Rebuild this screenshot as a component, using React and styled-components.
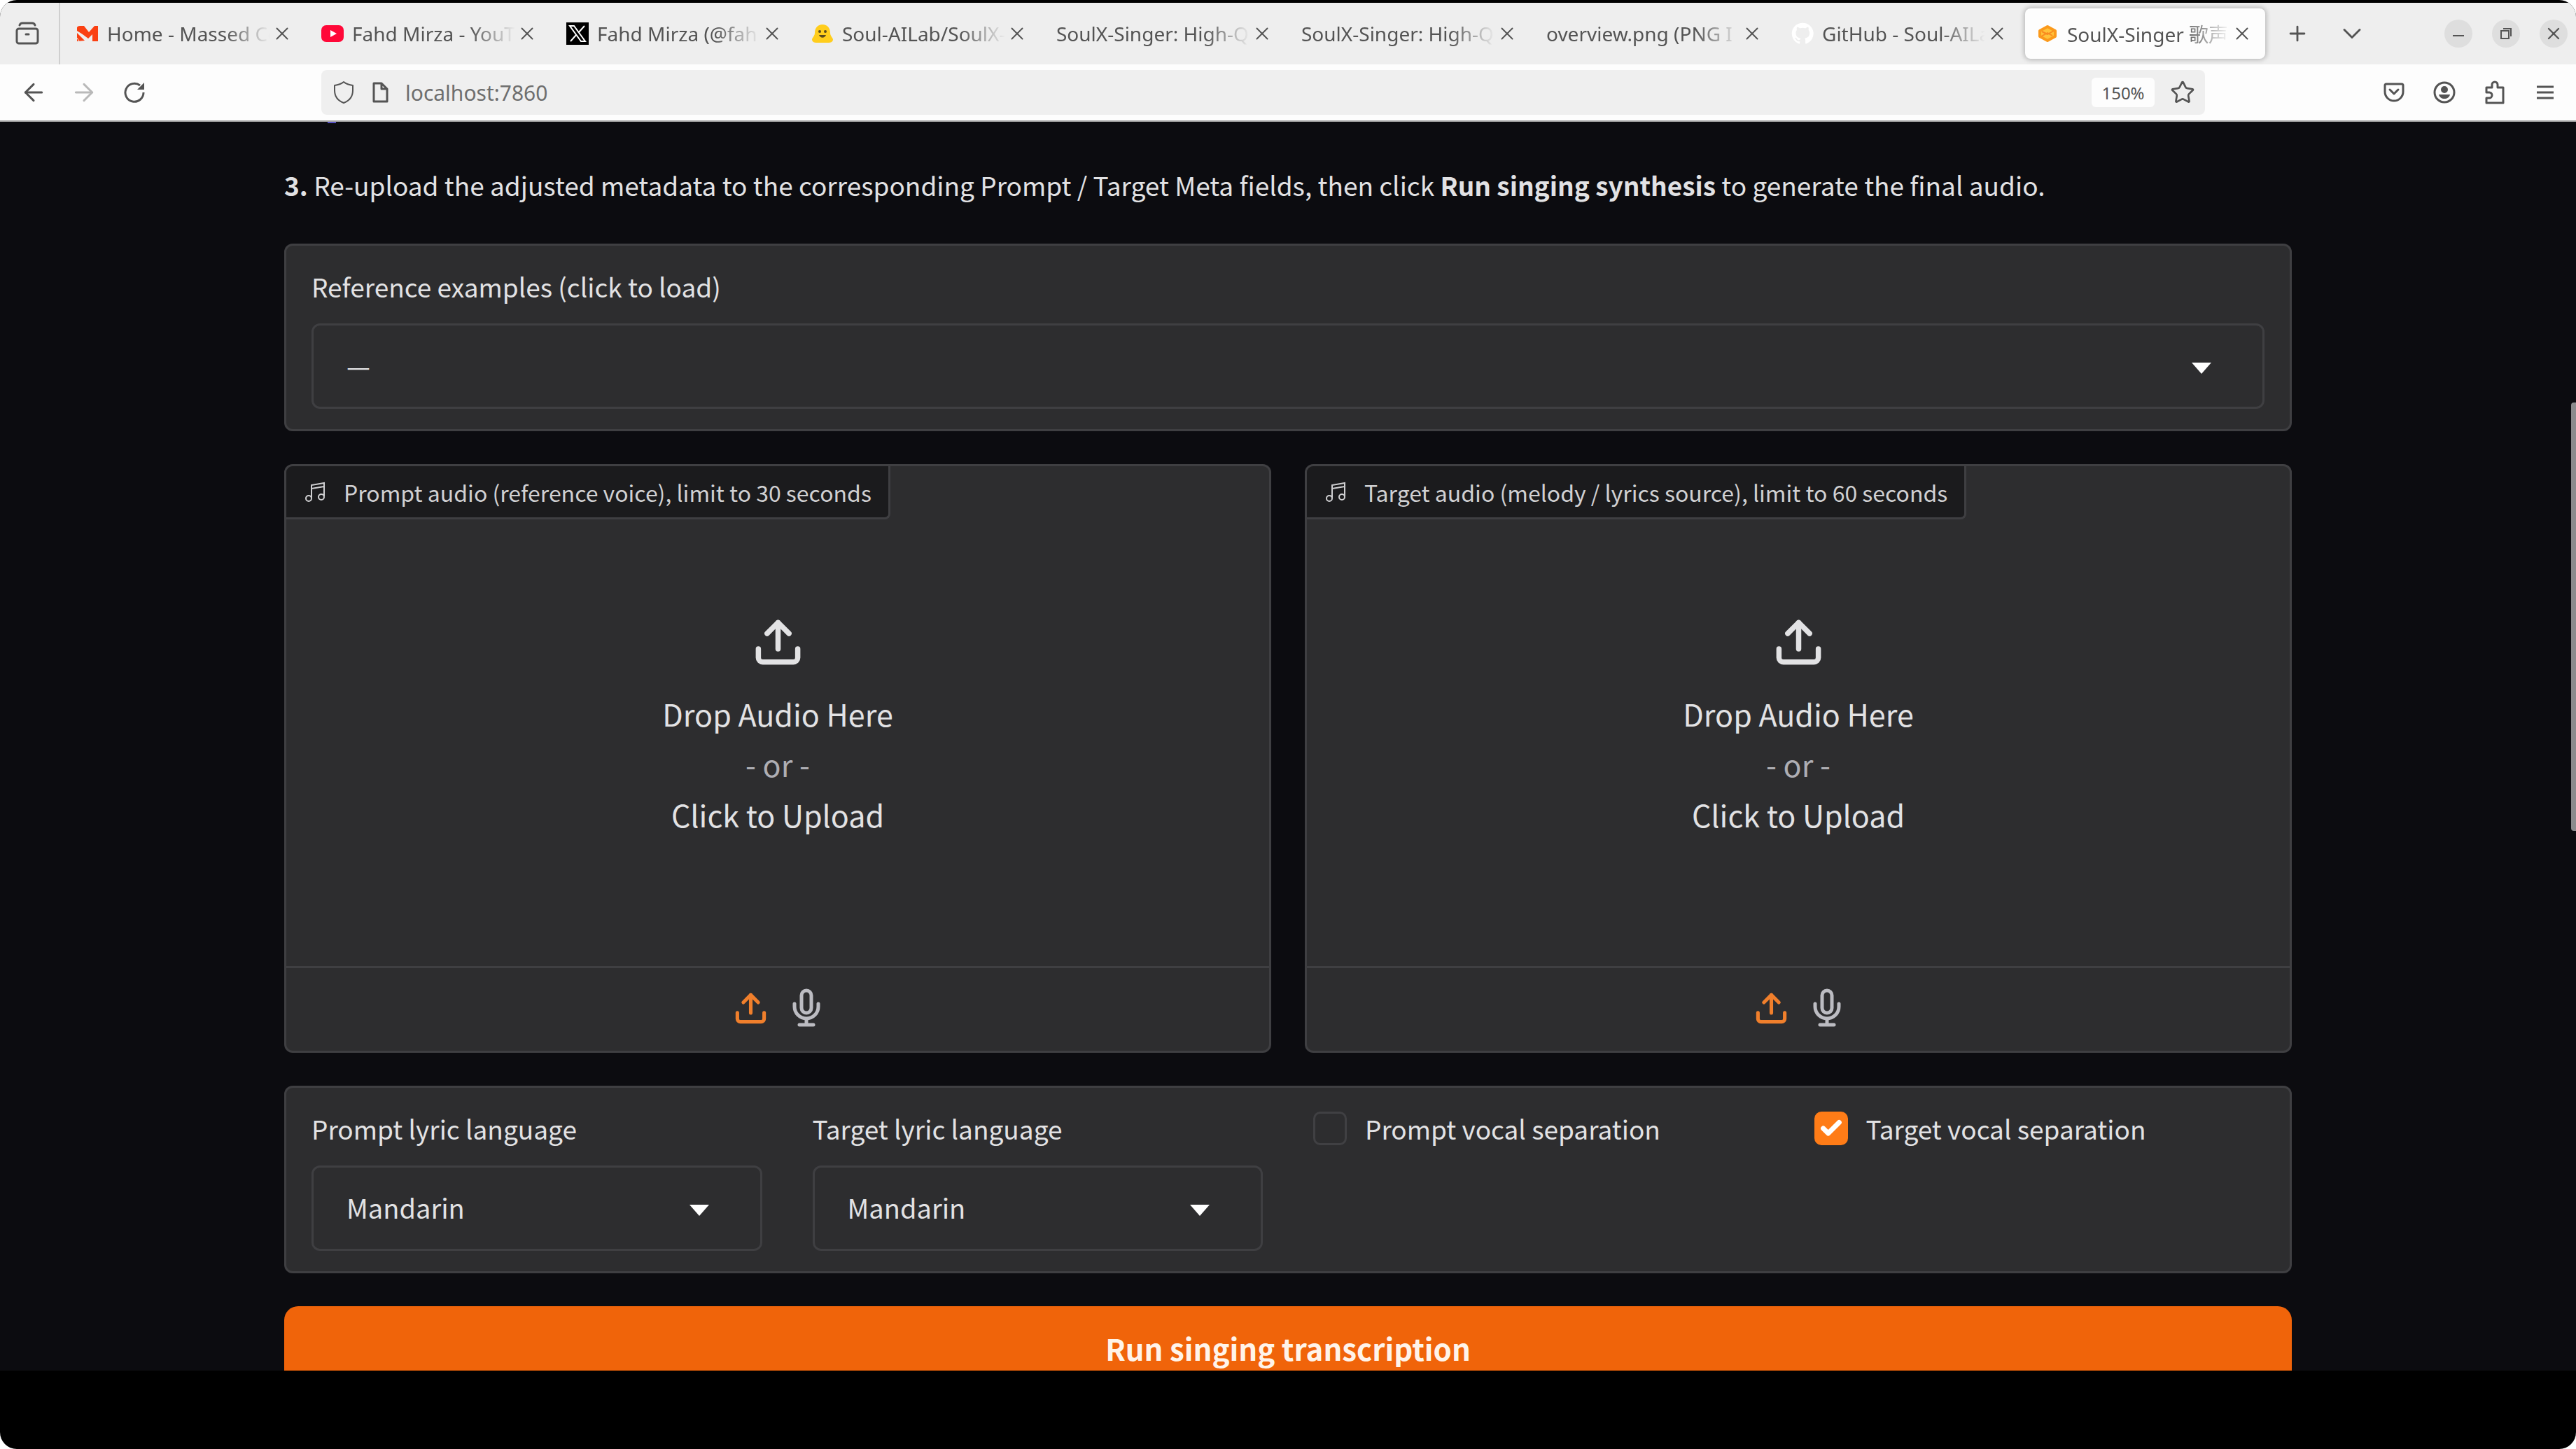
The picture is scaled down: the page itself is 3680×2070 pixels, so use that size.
import React from "react"
import styled, { createGlobalStyle } from "styled-components"
import { ArrowLeft, ArrowRight, Check, ChevronDown, Plus, Star, Upload, X } from "lucide-react"

const GlobalStyle = createGlobalStyle`
  * {
    box-sizing: border-box;
  }

  body {
    margin: 0;
    background: #ffffff;
  }

  button, select, input {
    font: inherit;
    color: inherit;
  }

  button {
    padding: 0;
    border: 0;
    background: none;
  }

  svg {
    display: block;
    flex-shrink: 0;
  }
`

const Screen = styled.div`
  display: flex;
  flex-direction: column;
  height: 100vh;
  padding: 4px 0 112px;
  overflow: hidden;
  border-radius: 24px;
  background: #000000;
`

/* browser chrome */

const TabStrip = styled.nav`
  display: flex;
  align-items: center;
  height: 88px;
  padding-right: 12px;
  background: #eeeeee;
  color: #545454;
  font-family: "Noto Sans", "Noto Sans CJK SC", sans-serif;
  font-size: 28px;
`

const SidebarButton = styled.button`
  display: flex;
  align-items: center;
  justify-content: center;
  align-self: stretch;
  width: 86px;
  padding-right: 7px;
  margin-right: 7px;
  border-right: 2px solid #cfcfcf;
`

const Tab = styled.div`
  display: flex;
  align-items: center;
  gap: 12px;
  width: 343px;
  height: 72px;
  padding: 0 18px 0 16px;
  margin-right: 7px;
  border-radius: 8px;
  background: ${p => (p.$active ? "#fdfdfd" : "transparent")};
  box-shadow: ${p => (p.$active ? "0 0 6px 2px rgba(0, 0, 0, 0.22)" : "none")};
`

const TabTitle = styled.span`
  flex: 1;
  min-width: 0;
  overflow: hidden;
  white-space: nowrap;
  mask-image: linear-gradient(to left, transparent, #000 64px);
`

const TabClose = styled.button`
  display: flex;
  margin-left: -10px;
`

const StripButton = styled.button`
  display: flex;
  align-items: center;
  justify-content: center;
  width: 78px;
  height: 64px;
`

const WindowButtons = styled.div`
  display: flex;
  gap: 28px;
  margin-left: auto;
`

const WindowButton = styled.button`
  display: flex;
  align-items: center;
  justify-content: center;
  width: 40px;
  height: 40px;
  border-radius: 50%;
  background: #dedede;
`

const Toolbar = styled.header`
  display: flex;
  align-items: center;
  justify-content: space-between;
  height: 82px;
  padding: 0 26px 0 30px;
  border-bottom: 2px solid #a5a5a5;
  background: #fdfdfd;
  color: #545454;
  font-family: "Noto Sans", sans-serif;
`

const ToolGroup = styled.div`
  display: flex;
  gap: 36px;
`

const ToolButton = styled.button`
  display: flex;
  align-items: center;
  justify-content: center;
  width: 36px;
  height: 40px;
  opacity: ${p => (p.disabled ? 0.4 : 1)};
`

const AddressBar = styled.div`
  display: flex;
  align-items: center;
  gap: 22px;
  flex: 1;
  height: 64px;
  padding: 0 14px 0 16px;
  margin: 0 252px 0 249px;
  border-radius: 8px;
  background: #efefef;
`

const AddressInput = styled.input`
  flex: 1;
  min-width: 0;
  padding: 0;
  border: 0;
  outline: 0;
  background: none;
  color: #6e6e6e;
  font-size: 30px;
`

const ZoomLevel = styled.button`
  width: 90px;
  height: 42px;
  border-radius: 6px;
  background: #fdfdfd;
  font-size: 24px;
`

/* page */

const Viewport = styled.div`
  position: relative;
  flex: 1;
  min-height: 0;
  overflow: hidden;
  background: #0c0c10;
  color: #e2e2e4;
  font-family: "Noto Sans CJK SC", sans-serif;
  font-size: 37px;
`

const ScrollThumb = styled.div`
  position: absolute;
  top: 401px;
  right: 0;
  width: 7px;
  height: 612px;
  border-radius: 4px 0 0 4px;
  background: #8b8b8d;
`

/* what is left of the link scrolled off the top */
const LinkTail = styled.div`
  position: absolute;
  top: 0;
  left: 468px;
  width: 12px;
  height: 2px;
  background: #5a55c8;
`

const Page = styled.main`
  display: flex;
  flex-direction: column;
  gap: 47px;
  max-width: 2948px;
  padding: 60px 40px 0;
  margin: 0 auto;
`

const Step = styled.p`
  margin: 0 0 7px;
  line-height: 60px;
`

const Panel = styled.section`
  display: grid;
  grid-template-columns: repeat(${p => p.$columns || 1}, 1fr);
  column-gap: 72px;
  padding: 30px 36px 29px;
  border: 3px solid #3f3f42;
  border-radius: 12px;
  background: #2d2d2f;
`

const Label = styled.label`
  display: block;
  margin-bottom: 25px;
  line-height: 56px;
`

const SelectBox = styled.div`
  position: relative;

  svg {
    position: absolute;
    top: 56px;
    right: 76px;
    pointer-events: none;
  }
`

const Select = styled.select`
  display: block;
  width: 100%;
  height: 122px;
  padding: 0 47px 4px;
  border: 3px solid #3f3f42;
  border-radius: 12px;
  background: #2d2d2f;
  font-size: 38px;
  appearance: none;
`

const CheckLabel = styled.label`
  display: flex;
  align-items: center;
  gap: 26px;
  align-self: start;
  height: 56px;
`

const CheckSlot = styled.span`
  display: grid;
  place-items: center;

  > * {
    grid-area: 1 / 1;
  }

  svg {
    pointer-events: none;
  }
`

const Checkbox = styled.input`
  width: 48px;
  height: 48px;
  margin: 0;
  border: 3px solid #404043;
  border-radius: 10px;
  background: #2d2d2f;
  appearance: none;

  &:checked {
    border-color: #ff7c17;
    background: #ff7c17;
  }

  & + svg {
    visibility: hidden;
  }

  &:checked + svg {
    visibility: visible;
  }
`

const AudioRow = styled.div`
  display: grid;
  grid-template-columns: 1fr 1fr;
  gap: 48px;
`

const AudioCard = styled.section`
  display: flex;
  flex-direction: column;
  height: 841px;
  overflow: hidden;
  border: 3px solid #3f3f42;
  border-radius: 12px;
  background: #2d2d2f;
`

const AudioTitle = styled.h2`
  display: flex;
  align-items: center;
  align-self: flex-start;
  gap: 26px;
  height: 76px;
  padding: 0 24px 0 26px;
  margin: 0;
  border: solid #3f3f42;
  border-width: 0 3px 3px 0;
  border-bottom-right-radius: 8px;
  background: #1b1b1d;
  color: #d0d0d2;
  font-size: 32px;
  font-weight: 400;
`

const DropZone = styled.button`
  display: flex;
  flex: 1;
  flex-direction: column;
  align-items: center;
  padding-top: 138px;
  font-size: 43px;
  line-height: 72px;

  svg {
    margin-bottom: 28px;
  }
`

const Or = styled.span`
  color: #aeaeb4;
`

const Sources = styled.div`
  display: flex;
  align-items: center;
  justify-content: center;
  gap: 34px;
  height: 121px;
  padding: 0 4px 4px 0;
  border-top: 3px solid #3f3f42;
`

const SourceButton = styled.button`
  color: ${p => (p.$active ? "#f07f2c" : "#bcbcc2")};
`

const RunButton = styled.button`
  height: 122px;
  padding-bottom: 4px;
  border-radius: 20px;
  background: #f0640a;
  color: #fff4ea;
  font-size: 42px;
  font-weight: 600;
`

const ArchiveIcon = () => (
  <svg width="34" height="34" viewBox="0 0 34 34" fill="none" stroke="currentColor" strokeWidth="3" strokeLinecap="round">
    <rect x="2" y="10" width="30" height="21" rx="3" />
    <path d="M6 5Q7 2 10 2H24Q27 2 28 5M15 18H19" />
  </svg>
)

const ReloadIcon = () => (
  <svg width="32" height="32" viewBox="0 0 32 32" fill="none" stroke="currentColor" strokeWidth="3">
    <path d="M29 16A13 13 0 1 1 24 6" />
    <path d="M30 2V12H20Z" fill="currentColor" stroke="none" />
  </svg>
)

const MassedIcon = () => (
  <svg width="32" height="28" viewBox="0 0 32 28" fill="#fa4012">
    <path d="M1 5Q2 3 5 3H11L18 12 26 3H31V25H23V15L17 21 9 15 1 10Z" />
    <path d="M1 13 12 24 1 25Z" />
    <path d="M1 20 4 25M0 11 14 25" fill="none" stroke="#eeeeee" strokeWidth="1" />
  </svg>
)

const YouTubeIcon = () => (
  <svg width="32" height="24" viewBox="0 0 32 24">
    <rect width="32" height="24" rx="7" fill="#ff0838" />
    <path d="m13 7 9 5-9 5Z" fill="#ffffff" />
  </svg>
)

const XIcon = () => (
  <svg width="32" height="32" viewBox="0 0 32 32">
    <path d="M0 0h32v32H0z" fill="#000000" />
    <path d="M5 5h6l16 22h-6ZM26 5 17 15M14 18l-8 9" fill="none" stroke="#ffffff" strokeWidth="2" />
  </svg>
)

const HuggingFaceIcon = () => (
  <svg width="32" height="28" viewBox="0 0 32 28">
    <path d="M16 1c7 0 11 5 11 12 0 4 3 6 4 9 0 4-3 5-7 5H8c-4 0-7-1-7-5 1-3 4-5 4-9C5 6 9 1 16 1Z" fill="#ffcd1c" />
    <circle cx="12" cy="11" r="2" fill="#5b4a1d" />
    <circle cx="20" cy="11" r="2" fill="#5b4a1d" />
    <path d="M11 16c2 5 8 5 10 0Z" fill="#5b4a1d" />
  </svg>
)

const GitHubIcon = () => (
  <svg width="32" height="32" viewBox="0 0 24 24" fill="#ffffff">
    <path d="M12 .5a11.5 11.5 0 0 0-3.6 22.4c.6.1.8-.3.8-.6v-2c-3.2.7-3.9-1.5-3.9-1.5-.5-1.3-1.3-1.7-1.3-1.7-1-.7.1-.7.1-.7 1.2.1 1.8 1.2 1.8 1.2 1 1.8 2.7 1.3 3.4 1 .1-.8.4-1.3.7-1.6-2.5-.3-5.2-1.3-5.2-5.7 0-1.3.4-2.3 1.2-3.1-.1-.3-.5-1.5.1-3.1 0 0 1-.3 3.2 1.2a11 11 0 0 1 5.8 0c2.2-1.5 3.2-1.2 3.2-1.2.6 1.6.2 2.8.1 3.1.8.8 1.2 1.8 1.2 3.1 0 4.4-2.7 5.4-5.3 5.7.4.4.8 1.1.8 2.1v3.2c0 .3.2.7.8.6A11.5 11.5 0 0 0 12 .5Z" />
  </svg>
)

const GradioIcon = () => (
  <svg width="32" height="28" viewBox="0 0 32 28" strokeLinejoin="round">
    <path d="M16 4 27 10V18L16 24 5 18V10Z" fill="#ffc23a" stroke="#fb9a1c" strokeWidth="4" />
    <path d="M25 10 16 15 8 11M7 18 16 13 23 17" fill="none" stroke="#f98a20" strokeWidth="2" />
  </svg>
)

const ShieldIcon = () => (
  <svg width="32" height="34" viewBox="0 0 32 34" fill="none" stroke="currentColor" strokeWidth="2" strokeLinejoin="round">
    <path d="M16 2Q21 6 29 7V14C29 23 24 29 16 32 8 29 3 23 3 14V7Q11 6 16 2Z" />
  </svg>
)

const PageIcon = () => (
  <svg width="28" height="30" viewBox="0 0 28 30" fill="none" stroke="currentColor" strokeWidth="3" strokeLinejoin="round">
    <path d="M5 2H16L24 10V28H5ZM16 2V10H24" />
  </svg>
)

const PocketIcon = () => (
  <svg width="30" height="28" viewBox="0 0 30 28" fill="none" stroke="currentColor" strokeWidth="3" strokeLinecap="round" strokeLinejoin="round">
    <path d="M4 2H26Q28 2 28 4V13A13 13 0 0 1 2 13V4Q2 2 4 2Z" />
    <path d="m9 10 6 6 6-6" />
  </svg>
)

const AccountIcon = () => (
  <svg width="32" height="32" viewBox="0 0 32 32">
    <circle cx="16" cy="16" r="14" fill="none" stroke="currentColor" strokeWidth="3" />
    <circle cx="16" cy="12" r="5" fill="currentColor" />
    <path d="M8 19H24C23 23 20 25 16 25S9 23 8 19Z" fill="currentColor" />
  </svg>
)

const ExtensionIcon = () => (
  <svg width="30" height="34" viewBox="0 0 30 34" fill="none" stroke="currentColor" strokeWidth="3" strokeLinejoin="round">
    <path d="M3 10H11V6A4 4 0 0 1 19 6V10H27V32H3V25H7A4 4 0 0 0 7 17H3Z" />
  </svg>
)

const MenuIcon = () => (
  <svg width="26" height="24" viewBox="0 0 26 24" stroke="currentColor" strokeWidth="3">
    <path d="M1 4H25M1 12H25M1 20H25" />
  </svg>
)

const NoteIcon = () => (
  <svg width="30" height="30" viewBox="0 0 30 30" fill="none" stroke="currentColor" strokeWidth="2">
    <path d="M10 24V5L28 2V21M10 10 28 7" />
    <circle cx="6" cy="24" r="4" />
    <circle cx="24" cy="22" r="4" />
  </svg>
)

const MicIcon = () => (
  <svg width="40" height="56" viewBox="0 0 40 56" fill="none" stroke="currentColor" strokeWidth="5" strokeLinecap="round">
    <rect x="13" y="3" width="14" height="32" rx="7" />
    <path d="M3 22V26A17 17 0 0 0 37 26V22M20 43V52M10 52H30" />
  </svg>
)

const CaretIcon = () => (
  <svg width="28" height="16" viewBox="0 0 28 16" fill="#ffffff">
    <path d="M0 0H28L14 16Z" />
  </svg>
)

const tabs = [
  { title: "Home - Massed Co", icon: <MassedIcon /> },
  { title: "Fahd Mirza - YouT", icon: <YouTubeIcon /> },
  { title: "Fahd Mirza (@fah", icon: <XIcon /> },
  { title: "Soul-AILab/SoulX-", icon: <HuggingFaceIcon /> },
  { title: "SoulX-Singer: High-Q" },
  { title: "SoulX-Singer: High-Q" },
  { title: "overview.png (PNG I" },
  { title: "GitHub - Soul-AILa", icon: <GitHubIcon /> },
  { title: "SoulX-Singer 歌声", icon: <GradioIcon />, active: true },
]

const Dropdown = ({ id, label, value }) => (
  <div>
    <Label htmlFor={id}>{label}</Label>
    <SelectBox>
      <Select id={id} defaultValue={value}>
        <option>{value}</option>
      </Select>
      <CaretIcon />
    </SelectBox>
  </div>
)

const Toggle = ({ label, checked }) => (
  <CheckLabel>
    <CheckSlot>
      <Checkbox type="checkbox" defaultChecked={checked} />
      <Check size={34} strokeWidth={5} color="#ffffff" />
    </CheckSlot>
    {label}
  </CheckLabel>
)

const AudioInput = ({ title }) => (
  <AudioCard>
    <AudioTitle>
      <NoteIcon />
      {title}
    </AudioTitle>
    <DropZone>
      <Upload size={75} strokeWidth={2.4} />
      <span>Drop Audio Here</span>
      <Or>- or -</Or>
      <span>Click to Upload</span>
    </DropZone>
    <Sources>
      <SourceButton $active aria-label="Upload file">
        <Upload size={51} strokeWidth={2.4} />
      </SourceButton>
      <SourceButton aria-label="Record audio">
        <MicIcon />
      </SourceButton>
    </Sources>
  </AudioCard>
)

const Browser = () => (
  <>
    <TabStrip>
      <SidebarButton aria-label="Recent browsing">
        <ArchiveIcon />
      </SidebarButton>
      {tabs.map((tab, i) => (
        <Tab key={i} $active={tab.active}>
          {tab.icon}
          <TabTitle>{tab.title}</TabTitle>
          <TabClose aria-label="Close tab">
            <X size={30} strokeWidth={1.6} />
          </TabClose>
        </Tab>
      ))}
      <StripButton aria-label="New tab">
        <Plus size={34} strokeWidth={2} />
      </StripButton>
      <StripButton aria-label="List all tabs">
        <ChevronDown size={44} strokeWidth={1.6} />
      </StripButton>
      <WindowButtons>
        <WindowButton aria-label="Minimize">
          <svg width="16" height="16" viewBox="0 0 16 16" stroke="currentColor" strokeWidth="2">
            <path d="M0 11H16" />
          </svg>
        </WindowButton>
        <WindowButton aria-label="Restore">
          <svg width="16" height="16" viewBox="0 0 16 16" fill="none" stroke="currentColor" strokeWidth="2">
            <path d="M1 4H12V15H1ZM4 1H15V12" />
          </svg>
        </WindowButton>
        <WindowButton aria-label="Close">
          <X size={28} strokeWidth={2} />
        </WindowButton>
      </WindowButtons>
    </TabStrip>
    <Toolbar>
      <ToolGroup>
        <ToolButton aria-label="Back">
          <ArrowLeft size={40} strokeWidth={1.8} />
        </ToolButton>
        <ToolButton aria-label="Forward" disabled>
          <ArrowRight size={40} strokeWidth={1.8} />
        </ToolButton>
        <ToolButton aria-label="Reload">
          <ReloadIcon />
        </ToolButton>
      </ToolGroup>
      <AddressBar>
        <ShieldIcon />
        <PageIcon />
        <AddressInput aria-label="Address" defaultValue="localhost:7860" />
        <ZoomLevel>150%</ZoomLevel>
        <Star size={36} strokeWidth={1.8} />
      </AddressBar>
      <ToolGroup>
        <ToolButton aria-label="Save to Pocket">
          <PocketIcon />
        </ToolButton>
        <ToolButton aria-label="Account">
          <AccountIcon />
        </ToolButton>
        <ToolButton aria-label="Extensions">
          <ExtensionIcon />
        </ToolButton>
        <ToolButton aria-label="Menu">
          <MenuIcon />
        </ToolButton>
      </ToolGroup>
    </Toolbar>
  </>
)

const App = () => (
  <Screen>
    <GlobalStyle />
    <Browser />
    <Viewport>
      <LinkTail />
      <Page>
        <Step>
          <b>3.</b> Re-upload the adjusted metadata to the corresponding Prompt / Target Meta fields, then click{" "}
          <b>Run singing synthesis</b> to generate the final audio.
        </Step>
        <Panel>
          <Dropdown id="examples" label="Reference examples (click to load)" value="—" />
        </Panel>
        <AudioRow>
          <AudioInput title="Prompt audio (reference voice), limit to 30 seconds" />
          <AudioInput title="Target audio (melody / lyrics source), limit to 60 seconds" />
        </AudioRow>
        <Panel $columns={4}>
          <Dropdown id="prompt-language" label="Prompt lyric language" value="Mandarin" />
          <Dropdown id="target-language" label="Target lyric language" value="Mandarin" />
          <Toggle label="Prompt vocal separation" />
          <Toggle label="Target vocal separation" checked />
        </Panel>
        <RunButton>Run singing transcription</RunButton>
      </Page>
      <ScrollThumb />
    </Viewport>
  </Screen>
)

export default App
